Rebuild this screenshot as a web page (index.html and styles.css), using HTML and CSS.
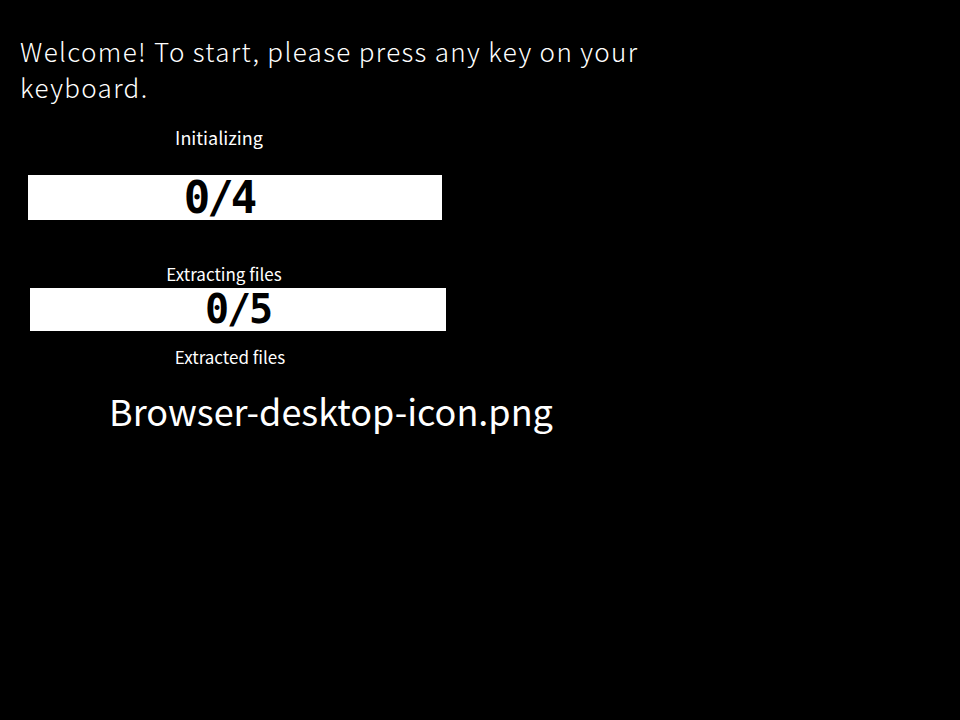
FILE: index.html
```html
<!DOCTYPE html>
<html>
<head>
<meta charset="utf-8">
<link rel="stylesheet" href="styles.css">
</head>
<body>
<p class="welcome">Welcome! To start, please press any key on your keyboard.</p>
<div class="label label-init">Initializing</div>
<div class="bar bar-init"><span class="count count-init">0/4</span></div>
<div class="label label-extracting">Extracting files</div>
<div class="bar bar-extract"><span class="count count-extract">0/5</span></div>
<div class="label label-extracted">Extracted files</div>
<div class="filename">Browser-desktop-icon.png</div>
</body>
</html>
```
FILE: styles.css
```css
html, body {
  margin: 0;
  padding: 0;
  background: #000;
  color: #fff;
  font-family: "Noto Sans CJK JP", "Noto Sans", sans-serif;
}
body {
  width: 960px;
  height: 720px;
  overflow: hidden;
}
.welcome {
  margin: 33px 0 0 20px;
  width: 660px;
  font-size: 26px;
  line-height: 36px;
  font-weight: 300;
  letter-spacing: 1.35px;
}
.label {
  text-align: center;
  white-space: nowrap;
}
.label-init {
  margin-top: 23px;
  width: 438px;
  font-size: 18px;
  line-height: 19px;
}
.label-extracting {
  margin-top: 45px;
  width: 448px;
  font-size: 17px;
  line-height: 17px;
}
.label-extracted {
  margin-top: 17px;
  width: 460px;
  font-size: 17px;
  line-height: 17px;
}
.bar {
  background: #fff;
  color: #000;
  display: flex;
  align-items: center;
  justify-content: center;
}
.bar-init {
  margin: 28px 0 0 28px;
  width: 414px;
  height: 45px;
  padding-right: 32px;
  box-sizing: border-box;
}
.bar-extract {
  margin: 6px 0 0 30px;
  width: 416px;
  height: 43px;
}
.count {
  font-family: "DejaVu Sans Mono", monospace;
  font-weight: bold;
}
.count-init {
  font-size: 44px;
  line-height: 45px;
  letter-spacing: -3px;
}
.count-extract {
  font-size: 40px;
  line-height: 43px;
  letter-spacing: -2px;
}
.filename {
  margin-top: 27px;
  width: 662px;
  text-align: center;
  font-size: 36px;
  line-height: 36px;
}
```
